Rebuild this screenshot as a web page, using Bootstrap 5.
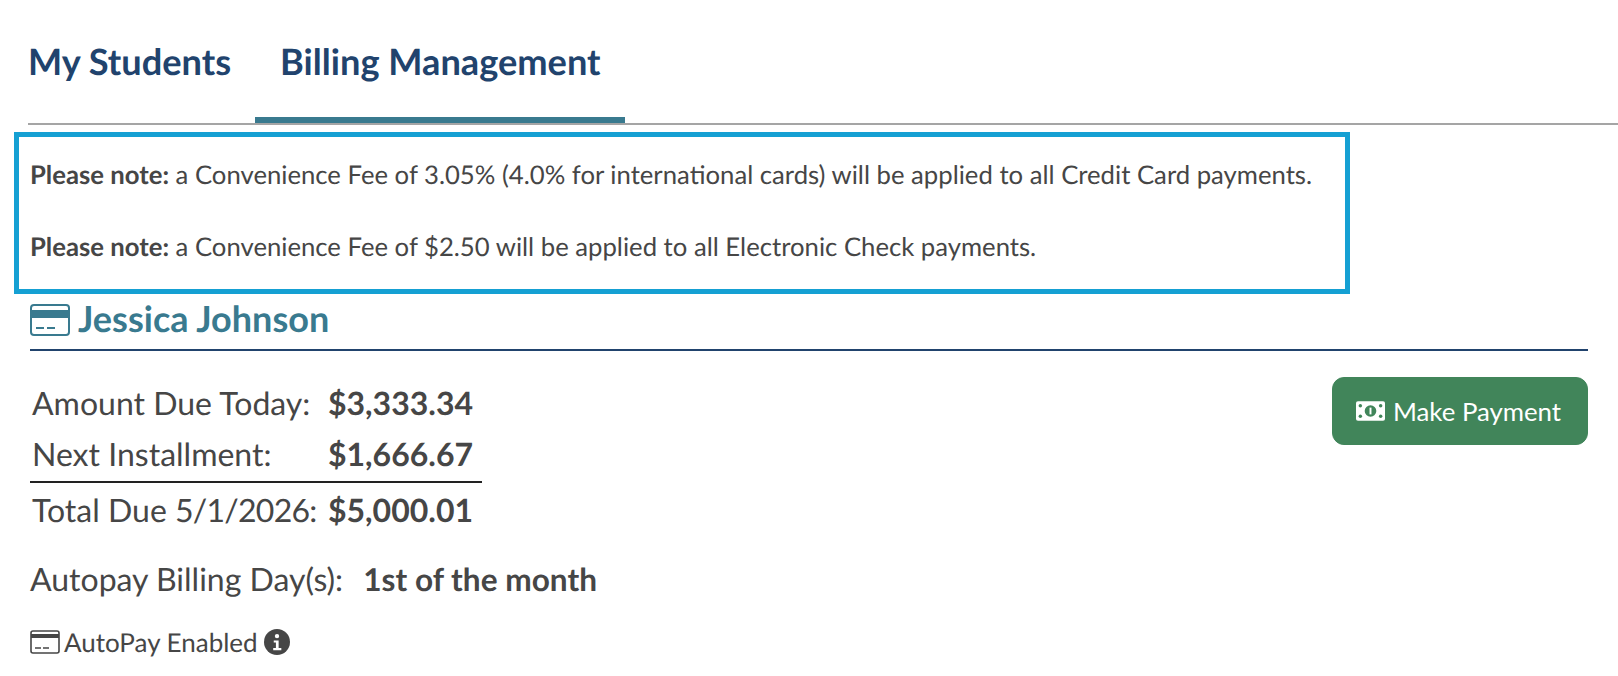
<!DOCTYPE html>
<html lang="en"><head><meta charset="utf-8"><title>Billing</title>
<link href="https://cdn.jsdelivr.net/npm/bootstrap@5.3.0/dist/css/bootstrap.min.css" rel="stylesheet">
<style>
html,body{height:676px;overflow:hidden}
body{font-family:Lato,sans-serif;color:#464646;background:#fff;text-rendering:geometricPrecision}
.tabs-bar{margin-left:28px;height:125px;border-bottom:2px solid #a5a5a5}
.tab-item{font-size:36.2px;font-weight:700;color:#21436d;text-decoration:none;line-height:44px;height:123px;padding-top:39px;display:block}
.tab-first{padding-right:24px}
.tab-active{padding-left:25px;padding-right:24px;border-bottom:6px solid #397a8f}
.note-box{margin:7px 0 0 14px;width:1336px;height:162px;border:5px solid #15a0d3;padding:0 11px;font-size:25.7px;color:#464646}
.note-box p{margin:0;line-height:32px}
.note-box p:first-child{margin-top:22px}
.note-box p+p{margin-top:40px}
.main-wrap{margin:0 30px}
.student-head{height:57px;border-bottom:2px solid #21436d;padding-bottom:3px;color:#397a8f;font-size:36px;font-weight:700;line-height:44px}
.head-name{margin-top:-4px}
.stat-grid{font-size:32px;line-height:38px;margin-top:26px}
.stat-row{display:flex;padding-left:2px;height:52px;width:452px;align-items:center}
.stat-label{width:296px;flex:none}
.stat-date{letter-spacing:-.75px}
.stat-rule{border-bottom:2px solid #222;height:54px;padding-bottom:2px}
.stat-last{height:53px}
.pay-btn{width:256px;height:68px;background:#41855a;border-color:#41855a;color:#fff;font-size:25.8px;border-radius:12px;margin-top:26px;padding:0 3px 0 0}
.pay-btn:hover{background:#41855a;border-color:#41855a;color:#fff}
.billing-line{font-size:32px;line-height:38px;margin-top:24px}
.billing-line b{margin-left:12px;font-size:31.6px}
.autopay-line{font-size:26px;line-height:30px;margin-top:29px}
.info-gap{margin-left:6px}
</style></head><body>
<nav class="tabs-bar d-flex">
<a class="tab-item tab-first" href="#">My Students</a>
<a class="tab-item tab-active" href="#">Billing Management</a>
</nav>
<div class="note-box">
<p><b>Please note:</b> a Convenience Fee of 3.05% (4.0% for international cards) will be applied to all Credit Card payments.</p>
<p><b>Please note:</b> a Convenience Fee of $2.50 will be applied to all Electronic Check payments.</p>
</div>
<div class="main-wrap">
<div class="student-head d-flex align-items-center gap-2">
<svg width="40" height="32" viewBox="0 0 40 32" fill="none"><rect x="1" y="1" width="38" height="30" rx="3" stroke="#397a8f" stroke-width="2"/><rect x="1" y="6" width="38" height="8" fill="#397a8f"/><path d="M6 24h8M17 24h8" stroke="#397a8f" stroke-width="2"/></svg>
<span class="head-name">Jessica Johnson</span></div>
<div class="d-flex justify-content-between">
<div>
<div class="stat-grid">
<div class="stat-row"><span class="stat-label">Amount Due Today:</span><b>$3,333.34</b></div>
<div class="stat-row stat-rule"><span class="stat-label">Next Installment:</span><b>$1,666.67</b></div>
<div class="stat-row stat-last"><span class="stat-label">Total Due <span class="stat-date">5/1/2026:</span></span><b>$5,000.01</b></div>
</div>
<div class="billing-line">Autopay Billing Day(s): <b>1st of the month</b></div>
<div class="autopay-line d-flex align-items-center">
<svg class="me-1" width="30" height="24" viewBox="0 0 30 24" fill="none"><rect x="1" y="1" width="28" height="22" rx="2" stroke="#464646" stroke-width="1.6"/><rect x="1" y="4" width="28" height="4" fill="#464646"/><path d="M5 18h6M13 18h6" stroke="#464646" stroke-width="1.6"/></svg>
<span>AutoPay Enabled</span>
<svg class="info-gap" width="26" height="26" viewBox="0 0 24 24"><circle cx="12" cy="12" r="12" fill="#464646"/><circle cx="12" cy="6.5" r="2" fill="#fff"/><path d="M9 10.5h4.5v7H16v2H8.5v-2H11v-5H9z" fill="#fff"/></svg>
</div>
</div>
<button class="btn pay-btn d-flex align-items-center justify-content-center gap-2" type="button">
<svg width="29" height="20" viewBox="0 0 30 20"><rect width="30" height="20" rx="2" fill="#fff"/><circle cx="15" cy="10" r="6" fill="#41855a"/><path d="M14 6.5h2v7h-2z" fill="#fff"/><circle cx="4.5" cy="4.5" r="1.8" fill="#41855a"/><circle cx="25.5" cy="4.5" r="1.8" fill="#41855a"/><circle cx="4.5" cy="15.5" r="1.8" fill="#41855a"/><circle cx="25.5" cy="15.5" r="1.8" fill="#41855a"/></svg>
<span>Make Payment</span></button>
</div>
</div>
<script src="https://cdn.jsdelivr.net/npm/bootstrap@5.3.0/dist/js/bootstrap.bundle.min.js"></script>
</body></html>
